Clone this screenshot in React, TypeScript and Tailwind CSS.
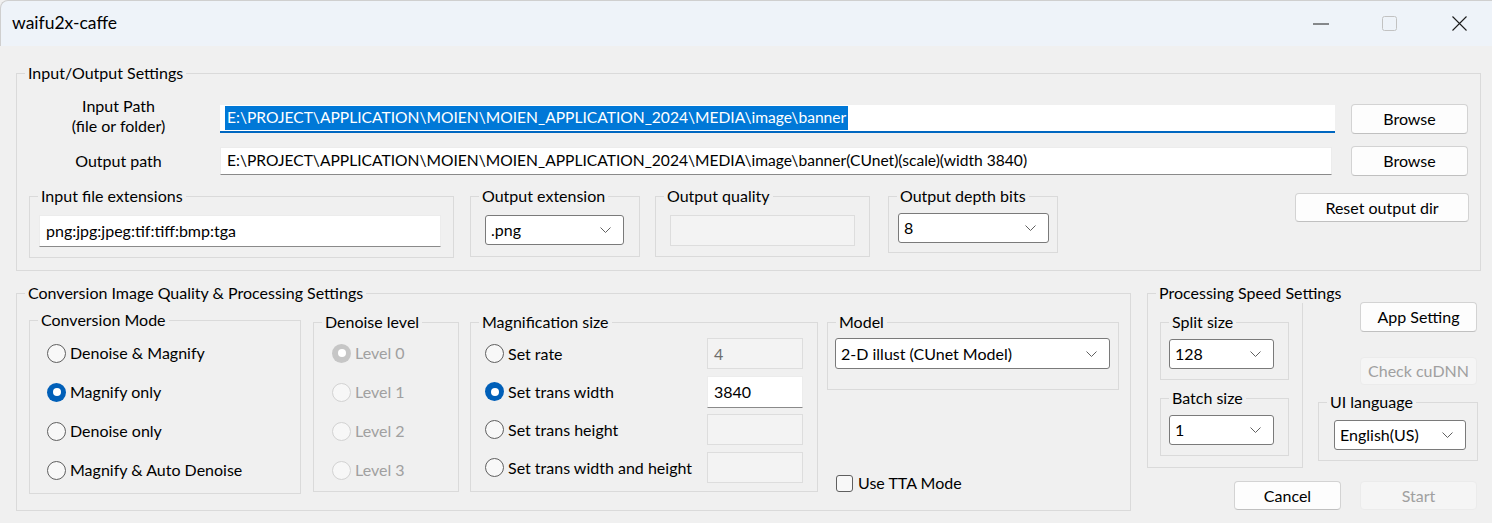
import React from "react";

function GroupBox({
  label,
  className = "",
  children,
}: {
  label: string;
  className?: string;
  children?: React.ReactNode;
}) {
  return (
    <div className={`relative shrink-0 border border-[#dadada] ${className}`}>
      <span className="absolute left-[8px] top-[-11px] whitespace-nowrap bg-[#f0f0f0] px-[3px] leading-[20px]">
        {label}
      </span>
      {children}
    </div>
  );
}

function Button({
  children,
  className = "",
  disabled = false,
}: {
  children: React.ReactNode;
  className?: string;
  disabled?: boolean;
}) {
  return (
    <div
      className={`flex shrink-0 items-center justify-center rounded-[4px] border ${
        disabled
          ? "border-[#ebebeb] bg-[#f5f5f5] text-[#a0a0a0]"
          : "border-[#d3d3d3] border-b-[#c0c0c0] bg-[#fdfdfd] text-black"
      } ${className}`}
    >
      {children}
    </div>
  );
}

function Chevron() {
  return (
    <svg width="11" height="6" viewBox="0 0 11 6" className="shrink-0">
      <path d="M0.5 0.5 L5.5 5.5 L10.5 0.5" fill="none" stroke="#606060" strokeWidth="1" />
    </svg>
  );
}

function Combo({ value, className = "" }: { value: string; className?: string }) {
  return (
    <div
      className={`flex shrink-0 items-center justify-between rounded-[3px] border border-[#7a7a7a] bg-white pl-[5px] pr-[12px] ${className}`}
    >
      <span>{value}</span>
      <Chevron />
    </div>
  );
}

function Field({
  value,
  disabled = false,
  className = "",
}: {
  value?: string;
  disabled?: boolean;
  className?: string;
}) {
  return (
    <div
      className={`flex shrink-0 items-center pl-[6px] ${
        disabled
          ? "border border-[#dddddd] bg-[#f3f3f3] text-[#6d6d6d]"
          : "border border-[#ececec] border-b-[#8a8a8a] bg-white"
      } ${className}`}
    >
      {value}
    </div>
  );
}

function Radio({ checked = false, disabled = false }: { checked?: boolean; disabled?: boolean }) {
  if (checked) {
    return (
      <span
        className={`flex h-[19px] w-[19px] shrink-0 items-center justify-center rounded-full ${
          disabled ? "bg-[#c6c6c6]" : "bg-[#005fb8]"
        }`}
      >
        <span className="h-[8px] w-[8px] rounded-full bg-white" />
      </span>
    );
  }
  return (
    <span
      className={`h-[19px] w-[19px] shrink-0 rounded-full border ${
        disabled ? "border-[#d2d2d2] bg-[#f7f7f7]" : "border-[#5f5f5f] bg-[#f8f8f8]"
      }`}
    />
  );
}

function RadioRow({
  label,
  checked,
  disabled,
}: {
  label: string;
  checked?: boolean;
  disabled?: boolean;
}) {
  return (
    <div className={`flex h-[20px] items-center gap-[4px] ${disabled ? "text-[#a0a0a0]" : ""}`}>
      <Radio checked={checked} disabled={disabled} />
      <span className="whitespace-nowrap">{label}</span>
    </div>
  );
}

function TitleBar() {
  return (
    <div className="flex h-[46px] items-center rounded-tl-[8px] border-l border-t border-[#cfcfcf] bg-[#eef3f9] pl-[11px]">
      <span className="text-[17.5px]">waifu2x-caffe</span>
      <div className="ml-auto flex h-full">
        <div className="flex w-[69px] items-center justify-center">
          <svg width="16" height="2" viewBox="0 0 16 2">
            <path d="M0 1 H16" stroke="#1c1c1c" strokeWidth="1" />
          </svg>
        </div>
        <div className="flex w-[69px] items-center justify-center">
          <svg width="15" height="15" viewBox="0 0 15 15">
            <rect x="0.5" y="0.5" width="14" height="14" rx="2" fill="none" stroke="#c2c2c2" />
          </svg>
        </div>
        <div className="flex w-[68px] items-center justify-center pl-[2px]">
          <svg width="15" height="15" viewBox="0 0 15 15">
            <path d="M0.5 0.5 L14.5 14.5 M14.5 0.5 L0.5 14.5" stroke="#1c1c1c" strokeWidth="1.1" />
          </svg>
        </div>
      </div>
    </div>
  );
}

export default function App() {
  return (
    <div className="h-[523px] w-[1492px] overflow-hidden bg-[#f0f0f0] font-['Lato',sans-serif] text-[16px] text-black">
      <TitleBar />

      {/* Input / Output */}
      <GroupBox label="Input/Output Settings" className="ml-[16px] mt-[27px] h-[198px] w-[1465px]">
        <div className="mt-[30px] flex h-[30px] items-center">
          <div className="mb-[6px] w-[203px] shrink-0 text-center leading-[20px]">
            Input Path
            <br />
            (file or folder)
          </div>
          <div className="flex h-[28px] w-[1115px] shrink-0 items-center border-b-2 border-[#0067c0] bg-white pl-[5px] text-[15.6px]">
            <span className="whitespace-nowrap bg-[#0078d7] px-[2px] text-white">
              E:\PROJECT\APPLICATION\MOIEN\MOIEN_APPLICATION_2024\MEDIA\image\banner
            </span>
          </div>
          <Button className="ml-[16px] h-[30px] w-[117px]">Browse</Button>
        </div>

        <div className="mt-[12px] flex h-[30px] items-center">
          <div className="w-[203px] shrink-0 text-center">Output path</div>
          <Field
            className="h-[28px] w-[1112px] whitespace-nowrap text-[15.6px]"
            value="E:\PROJECT\APPLICATION\MOIEN\MOIEN_APPLICATION_2024\MEDIA\image\banner(CUnet)(scale)(width 3840)"
          />
          <Button className="ml-[19px] h-[30px] w-[117px]">Browse</Button>
        </div>

        <div className="mt-[20px] flex items-start">
          <GroupBox label="Input file extensions" className="ml-[12px] h-[62px] w-[425px]">
            <Field className="ml-[9px] mt-[18px] h-[32px] w-[402px]" value="png:jpg:jpeg:tif:tiff:bmp:tga" />
          </GroupBox>
          <GroupBox label="Output extension" className="ml-[16px] h-[61px] w-[170px]">
            <Combo className="ml-[14px] mt-[18px] h-[30px] w-[139px]" value=".png" />
          </GroupBox>
          <GroupBox label="Output quality" className="ml-[15px] h-[61px] w-[215px]">
            <Field disabled className="ml-[14px] mt-[18px] h-[31px] w-[185px]" />
          </GroupBox>
          <GroupBox label="Output depth bits" className="ml-[18px] h-[57px] w-[170px]">
            <Combo className="ml-[9px] mt-[16px] h-[30px] w-[151px]" value="8" />
          </GroupBox>
          <Button className="ml-[237px] mt-[-3px] h-[29px] w-[174px]">Reset output dir</Button>
        </div>
      </GroupBox>

      <div className="mt-[22px] flex items-start">
        {/* Conversion settings */}
        <GroupBox
          label="Conversion Image Quality & Processing Settings"
          className="ml-[16px] flex h-[218px] w-[1115px] items-start"
        >
          <GroupBox label="Conversion Mode" className="ml-[12px] mt-[26px] h-[174px] w-[272px]">
            <div className="flex flex-col gap-[19px] pl-[17px] pt-[22px]">
              <RadioRow label="Denoise & Magnify" />
              <RadioRow label="Magnify only" checked />
              <RadioRow label="Denoise only" />
              <RadioRow label="Magnify & Auto Denoise" />
            </div>
          </GroupBox>

          <GroupBox label="Denoise level" className="ml-[12px] mt-[28px] h-[170px] w-[146px]">
            <div className="flex flex-col gap-[19px] pl-[18px] pt-[20px]">
              <RadioRow label="Level 0" checked disabled />
              <RadioRow label="Level 1" disabled />
              <RadioRow label="Level 2" disabled />
              <RadioRow label="Level 3" disabled />
            </div>
          </GroupBox>

          <GroupBox label="Magnification size" className="ml-[11px] mt-[28px] h-[170px] w-[348px]">
            <div className="flex flex-col gap-[7px] pl-[14px] pt-[15px]">
              {[
                { label: "Set rate", value: "4", disabled: true },
                { label: "Set trans width", value: "3840", checked: true },
                { label: "Set trans height", disabled: true },
                { label: "Set trans width and height", disabled: true },
              ].map((row) => (
                <div key={row.label} className="flex h-[31px] items-center">
                  <div className="flex w-[208px] shrink-0 items-center gap-[4px] overflow-hidden">
                    <Radio checked={row.checked} />
                    <span className="whitespace-nowrap">{row.label}</span>
                  </div>
                  <Field
                    disabled={row.disabled}
                    value={row.value}
                    className={`ml-[14px] w-[96px] ${row.disabled ? "h-[31px]" : "h-[32px] text-black"}`}
                  />
                </div>
              ))}
            </div>
          </GroupBox>

          <div className="ml-[9px] mt-[28px] flex flex-col">
            <GroupBox label="Model" className="h-[68px] w-[292px]">
              <Combo className="ml-[7px] mt-[15px] h-[31px] w-[275px]" value="2-D illust (CUnet Model)" />
            </GroupBox>
            <div className="ml-[9px] mt-[84px] flex h-[18px] items-center gap-[5px]">
              <span className="h-[17px] w-[17px] rounded-[3px] border border-[#5f5f5f] bg-[#f8f8f8]" />
              <span>Use TTA Mode</span>
            </div>
          </div>
        </GroupBox>

        {/* Right side */}
        <div className="ml-[16px] flex flex-col">
          <div className="flex items-start">
            <GroupBox label="Processing Speed Settings" className="h-[175px] w-[156px]">
              <GroupBox label="Split size" className="ml-[12px] mt-[28px] h-[58px] w-[129px]">
                <Combo className="ml-[8px] mt-[16px] h-[30px] w-[105px]" value="128" />
              </GroupBox>
              <GroupBox label="Batch size" className="ml-[12px] mt-[18px] h-[58px] w-[129px]">
                <Combo className="ml-[8px] mt-[16px] h-[30px] w-[105px]" value="1" />
              </GroupBox>
            </GroupBox>

            <div className="ml-[15px] flex flex-col">
              <Button className="ml-[42px] mt-[9px] h-[30px] w-[117px]">App Setting</Button>
              <Button disabled className="ml-[42px] mt-[25px] h-[28px] w-[117px]">
                Check cuDNN
              </Button>
              <GroupBox label="UI language" className="mt-[17px] h-[59px] w-[160px]">
                <Combo className="ml-[15px] mt-[17px] h-[30px] w-[132px]" value="English(US)" />
              </GroupBox>
            </div>
          </div>

          <div className="mt-[13px] flex">
            <Button className="ml-[87px] h-[29px] w-[107px]">Cancel</Button>
            <Button disabled className="ml-[19px] h-[29px] w-[117px]">
              Start
            </Button>
          </div>
        </div>
      </div>
    </div>
  );
}
